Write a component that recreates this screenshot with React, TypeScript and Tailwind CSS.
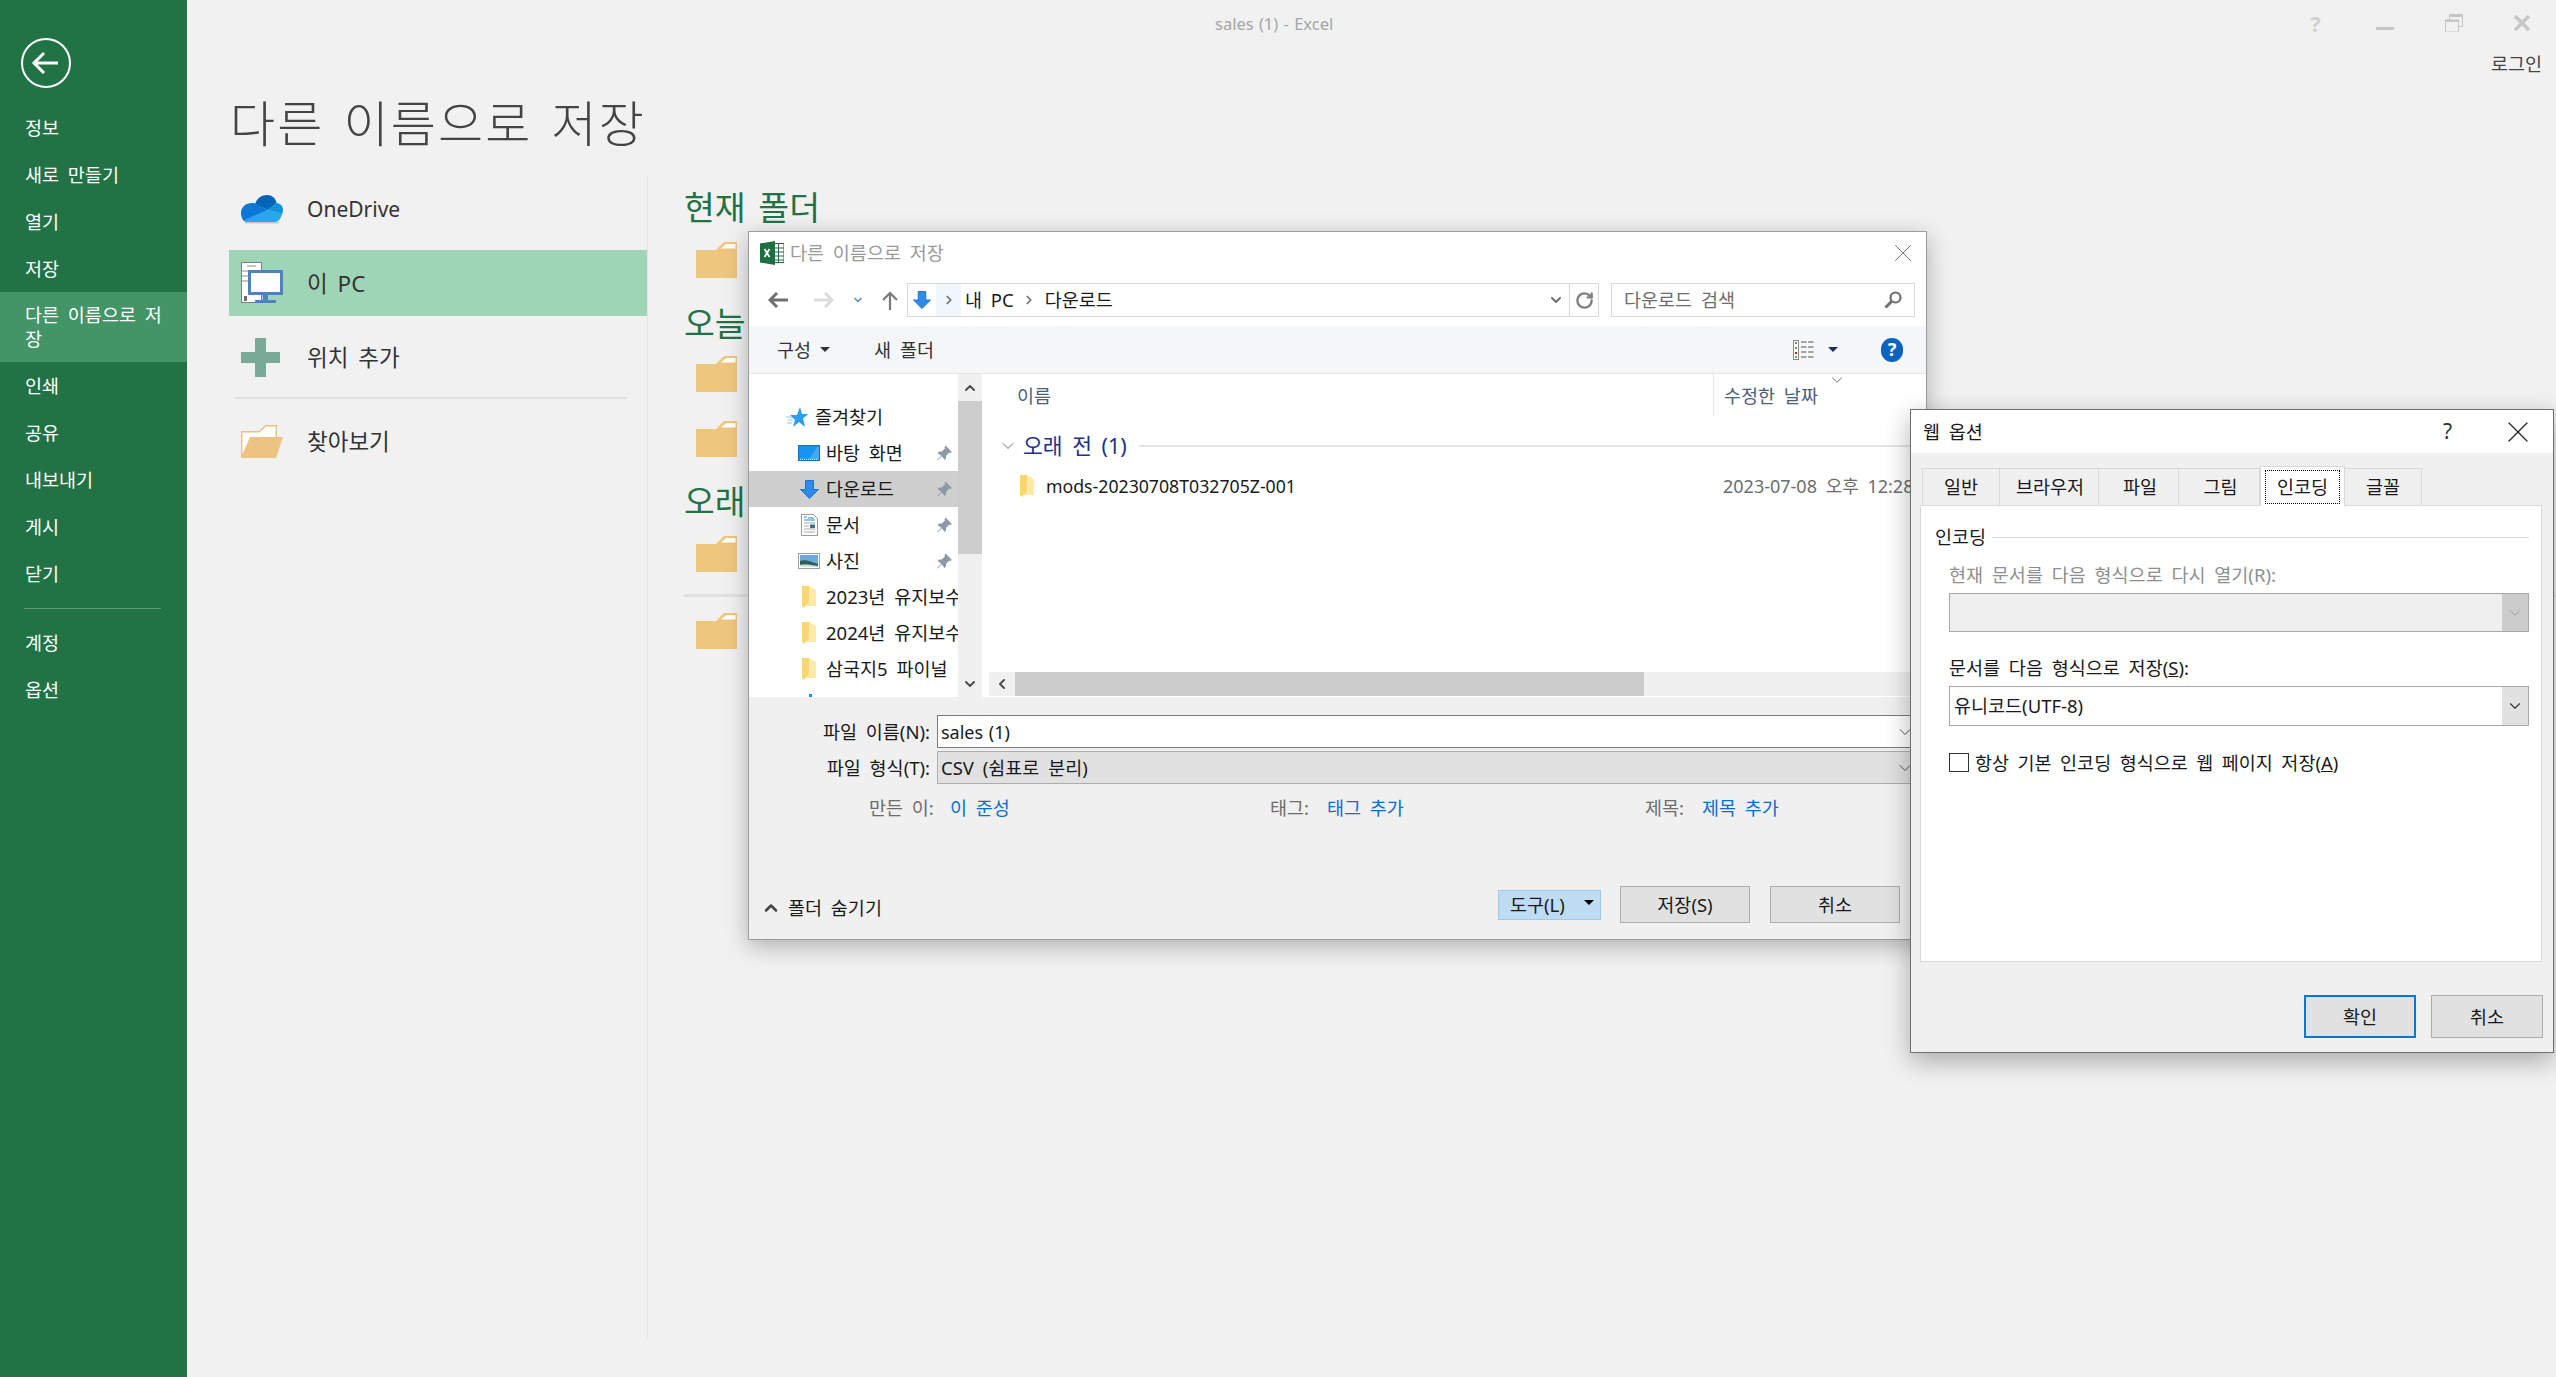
import { ChevronDown, ChevronLeft, ChevronRight, ChevronUp, RotateCw, X } from "lucide-react";
import type { ReactNode } from "react";

const menuTop = ["정보", "새로 만들기", "열기", "저장"];
const menuMid = ["인쇄", "공유", "내보내기", "게시", "닫기"];
const menuBottom = ["계정", "옵션"];

const OneDriveIcon = () => (
  <svg width="42" height="29" viewBox="0 0 42 29">
    <path d="M3 27h36l-2 1.5H5z" fill="#c8c8c8" />
    <path d="M14 9C16 3 21 0 26 0c5 0 8.500 3 9.500 8L27 15z" fill="#0364b8" />
    <path d="M0 18C0 12 5 8 11 8c1.500 0 3 .3 4 1l12 6-14 12H6C2.500 27 0 23 0 18z" fill="#0a78d4" />
    <path d="M27 15l8-7c4 0 7 3 7 7 0 1.200-.2 2.200-.6 3.200L33 21z" fill="#1490df" />
    <path d="M27 14.500L41.400 18c-1 4.500-3.500 9-7.400 9H7c-1.500 0-3-1-3.800-2z" fill="#28a8ea" />
  </svg>
);

const PcIcon = () => (
  <svg width="42" height="42" viewBox="0 0 42 42">
    <rect x="0.500" y="0.500" width="20" height="40" fill="#fff" stroke="#7f7f7f" />
    <path d="M6 4h9M1 9h19M1 14h19M1 19h19" stroke="#8a8a8a" strokeWidth="1" />
    <rect x="3" y="34" width="3" height="5" fill="#6f6f6f" />
    <rect x="7" y="8" width="35" height="25" rx="1" fill="#4c82bd" />
    <rect x="10" y="11" width="29" height="19" fill="#fff" />
    <rect x="22" y="33" width="5" height="5" fill="#4c82bd" />
    <rect x="14" y="38" width="21" height="3" rx="1" fill="#4c82bd" />
  </svg>
);

const PlusIcon = () => (
  <svg width="39" height="39" viewBox="0 0 39 39">
    <path d="M14 0h11v14h14v11H25v14H14V25H0V14h14z" fill="#7aa996" />
  </svg>
);

const OpenFolderIcon = () => (
  <svg width="42" height="33" viewBox="0 0 42 33">
    <path d="M.7 32V6.700H18L25 .7h10.300V14H10L.7 32z" fill="#fff" stroke="#e8c283" strokeWidth="1.400" />
    <path d="M9 12h33l-7 21H0z" fill="#ecc382" />
  </svg>
);

const FolderIcon = () => (
  <svg width="41" height="36" viewBox="0 0 41 36">
    <path d="M0 8h20L28 0h13v36H0z" fill="#eec77f" />
    <path d="M24 7l6-5.500h10V7z" fill="#fff" stroke="#eec77f" />
  </svg>
);

const YellowFolder = () => (
  <svg width="14" height="22" viewBox="0 0 14 22">
    <path d="M0 0h7l7 4v16H3l-.5 2L0 20z" fill="#ffe9a6" />
    <path d="M0 0h7v17l-4 3-.5 2L0 20z" fill="#f9d66f" />
  </svg>
);

const DesktopIcon = () => (
  <svg width="22" height="16" viewBox="0 0 22 16">
    <rect x="0.500" y="0.500" width="21" height="15" fill="#1a92f0" stroke="#0f6fc6" />
    <path d="M11 14.500L19 2h2v12.500z" fill="#43a9f5" />
    <path d="M2 14.300h18" stroke="#fff" strokeWidth="1" strokeDasharray="1 1" />
  </svg>
);

const DownloadArrow = ({ size = 19 }: { size?: number }) => (
  <svg width={size} height={size} viewBox="0 0 19 19">
    <path d="M5.500.5h8v9H18.500L9.500 18.500.5 9.500h5z" fill="#2f8ae8" stroke="#2472c8" />
  </svg>
);

const DocIcon = () => (
  <svg width="17" height="22" viewBox="0 0 17 22">
    <path d="M.5.5h12l4 4v17H.5z" fill="#fff" stroke="#9a9a9a" />
    <path d="M3 3h3M7 4h6M3 6h11" stroke="#1e90e8" strokeWidth="1.200" />
    <path d="M3 9h11M3 12h5M3 15h11M3 18h11" stroke="#a8a8a8" strokeWidth="1" />
    <rect x="9" y="10.500" width="5" height="3.500" fill="#3a6f9a" />
  </svg>
);

const PictureIcon = () => (
  <svg width="22" height="16" viewBox="0 0 22 16">
    <rect x="0.500" y="0.500" width="21" height="15" fill="#fff" stroke="#a0a0a0" />
    <rect x="2" y="2" width="18" height="12" fill="#6fa8dc" />
    <path d="M2 8c5-2 9 0 18 3v3H2z" fill="#2f5f4f" />
    <path d="M2 12c5-1 11 0 18 1v1H2z" fill="#cfe0ea" />
  </svg>
);

const PinIcon = () => (
  <svg width="17" height="18" viewBox="0 0 16 16">
    <path
      d="M9 1l6 6-1.500 1-1-.5-3 3V13L8 14.500 5.500 11l-4 4-.5-.5 4-4L1.500 8 3 6.500h2.500l3-3L8 2.500z"
      fill="#8c99a6"
    />
  </svg>
);

const StarIcon = () => (
  <svg width="22" height="20" viewBox="0 0 22 20">
    <path d="M14 0l2 7h6l-5 4.500 2 8.500-6-5-6 5 2-7L4 8h7z" fill="#2a9df4" />
    <path d="M0 10h6M2 13h5M1 16h5" stroke="#8cc8f6" strokeWidth="1" />
  </svg>
);

const ExcelIcon = () => (
  <svg width="24" height="24" viewBox="0 0 24 24">
    <rect x="14" y="2.500" width="10" height="19" fill="#fff" stroke="#1e6e42" />
    <path d="M14 7h10M14 11h10M14 15h10M14 19h10M18.500 3v18" stroke="#1e6e42" strokeWidth="1" />
    <path d="M0 2.500L15 0v24L0 21.500z" fill="#1d6f42" />
    <path d="M4.500 8l5 8M9.500 8l-5 8" stroke="#fff" strokeWidth="1.800" />
  </svg>
);

const BackCircle = () => (
  <svg width="50" height="50" viewBox="0 0 50 50">
    <circle cx="25" cy="25" r="24" fill="none" stroke="#fff" strokeWidth="2" />
    <path d="M13 25h24M23 15L13 25l10 10" fill="none" stroke="#fff" strokeWidth="3" />
  </svg>
);

const NavArrow = ({ dir, color }: { dir: "left" | "right"; color: string }) => (
  <svg width="20" height="16" viewBox="0 0 20 16">
    <path
      d={dir === "left" ? "M20 8H2M9 1L2 8l7 7" : "M0 8h18M11 1l7 7-7 7"}
      fill="none"
      stroke={color}
      strokeWidth="3"
    />
  </svg>
);

const UpArrow = () => (
  <svg width="16" height="19" viewBox="0 0 16 19">
    <path d="M8 19V2M1 9l7-7 7 7" fill="none" stroke="#7a7a7a" strokeWidth="2.200" />
  </svg>
);

const SearchIcon = () => (
  <svg width="18" height="18" viewBox="0 0 18 18">
    <circle cx="11.500" cy="6.500" r="5" fill="none" stroke="#6e6e6e" strokeWidth="2.200" />
    <path d="M8 10l-6.500 6.500" stroke="#6e6e6e" strokeWidth="3" />
  </svg>
);

const ViewIcon = () => (
  <svg width="21" height="20" viewBox="0 0 21 20">
    <rect x="0.500" y="0.500" width="5" height="19" fill="#fff" stroke="#8a8a8a" />
    <rect x="2" y="2" width="2" height="2" fill="#5a8a9a" />
    <rect x="2" y="7" width="2" height="2" fill="#7a9a3a" />
    <rect x="2" y="12" width="2" height="2" fill="#c0271c" />
    <rect x="2" y="16" width="2" height="2" fill="#8aa83a" />
    <path d="M8 2h13M8 7h13M8 12h13M8 17h13" stroke="#8a8a8a" strokeWidth="1.300" strokeDasharray="5.500 1.500" />
  </svg>
);

const Caret = ({ className }: { className: string }) => (
  <div className={`w-0 h-0 border-x-[5px] border-x-transparent border-t-[5px] ${className}`} />
);

const WinBtn = ({ children, w = "w-[69px]" }: { children: ReactNode; w?: string }) => (
  <div className={`${w} h-[46px] flex items-center justify-center`}>{children}</div>
);

const Sidebar = () => (
  <aside className="w-[187px] shrink-0 bg-[#217346] flex flex-col text-white text-[18.500px] h-full">
    <div className="ml-[21px] mt-[38px] mb-[16px]">
      <BackCircle />
    </div>
    {menuTop.map((m) => (
      <div key={m} className="h-[47px] flex items-center pl-[25px]">
        {m}
      </div>
    ))}
    <div className="h-[70px] bg-[#439467] pl-[25px] pr-[16px] flex items-center leading-[24px]">
      다른 이름으로 저장
    </div>
    {menuMid.map((m) => (
      <div key={m} className="h-[47px] flex items-center pl-[25px]">
        {m}
      </div>
    ))}
    <div className="mt-[11px] mb-[10px] ml-[24px] w-[137px] h-px bg-[#5a9a76]" />
    {menuBottom.map((m) => (
      <div key={m} className="h-[47px] flex items-center pl-[25px]">
        {m}
      </div>
    ))}
  </aside>
);

const PlaceRow = ({ icon, label, active, size = "text-[22.500px]" }: { icon: ReactNode; label: string; active?: boolean; size?: string }) => (
  <div className={`h-[66px] flex items-center ${active ? "bg-[#9fd5b7]" : ""}`}>
    <div className="w-[78px] pl-[12px] flex items-center">{icon}</div>
    <span className={`${size} pt-[2px] text-[#333]`}>{label}</span>
  </div>
);

const GreenHeading = ({ text, className }: { text: string; className: string }) => (
  <div className={`h-[64px] flex items-center text-[33.500px] text-[#217346] ${className}`}>{text}</div>
);

const Backstage = () => (
  <main className="flex-1 flex flex-col h-full min-w-0">
    <div className="flex h-[46px]">
      <div className="ml-[1028px] pt-[2px] flex items-center text-[16.500px] text-[#a6a6a6] [word-spacing:1px]">
        sales (1) - Excel
      </div>
      <div className="ml-auto flex">
        <WinBtn>
          <span className="text-[22px] font-bold text-[#d0d0d0]">?</span>
        </WinBtn>
        <WinBtn>
          <div className="w-[18px] h-[3px] bg-[#c6c6c6] mt-[10px]" />
        </WinBtn>
        <WinBtn>
          <svg width="18" height="18" viewBox="0 0 18 18">
            <rect x="4.500" y="0.500" width="13" height="12" fill="none" stroke="#c6c6c6" />
            <rect x="0.500" y="6" width="13" height="12" fill="#f1f1f1" stroke="#c6c6c6" />
            <path d="M1 7h12M5 2h12" stroke="#c6c6c6" strokeWidth="2" />
          </svg>
        </WinBtn>
        <WinBtn w="w-[68px]">
          <svg width="16" height="16" viewBox="0 0 16 16">
            <path d="M1 1l14 14M15 1L1 15" stroke="#c6c6c6" strokeWidth="3.500" />
          </svg>
        </WinBtn>
      </div>
    </div>
    <div className="mt-[8px] h-[20px] flex justify-end items-center pr-[14px] text-[18.500px] text-[#444]">로그인</div>
    <h1 className="mt-[20px] h-[60px] pl-[43px] flex items-center text-[49px] font-light tracking-[2.200px] text-[#444]">
      다른 이름으로 저장
    </h1>
    <div className="mt-[21px] ml-[42px] flex h-[1163px]">
      <div className="w-[418px] shrink-0 flex flex-col gap-[8px] pt-[1px]">
        <PlaceRow icon={<OneDriveIcon />} label="OneDrive" size="text-[21px]" />
        <PlaceRow icon={<PcIcon />} label="이 PC" active />
        <PlaceRow icon={<PlusIcon />} label="위치 추가" />
        <div className="ml-[6px] mr-[20px] h-[2px] bg-[#e1e1e1] -my-[1px]" />
        <div className="mt-[2px]">
          <PlaceRow icon={<OpenFolderIcon />} label="찾아보기" />
        </div>
      </div>
      <div className="flex-1 border-l border-[#e4e4e4] pl-[36px]">
        <GreenHeading text="현재 폴더" className="" />
        <div className="ml-[12px] mt-[3px]">
          <FolderIcon />
        </div>
        <GreenHeading text="오늘" className="mt-[13px] -mb-px" />
        <div className="ml-[12px] mt-[2px]">
          <FolderIcon />
        </div>
        <div className="ml-[12px] mt-[29px]">
          <FolderIcon />
        </div>
        <GreenHeading text="오래 전" className="mt-[12px] -mb-px" />
        <div className="ml-[12px] mt-[4px]">
          <FolderIcon />
        </div>
        <div className="mt-[22px] h-[3px] bg-[#e1e1e1]" />
        <div className="ml-[12px] mt-[16px]">
          <FolderIcon />
        </div>
      </div>
    </div>
  </main>
);

const navRows: { icon: ReactNode; label: string; pin?: boolean; active?: boolean }[] = [
  { icon: <DesktopIcon />, label: "바탕 화면", pin: true },
  { icon: <DownloadArrow />, label: "다운로드", pin: true, active: true },
  { icon: <DocIcon />, label: "문서", pin: true },
  { icon: <PictureIcon />, label: "사진", pin: true },
  { icon: <YellowFolder />, label: "2023년 유지보수" },
  { icon: <YellowFolder />, label: "2024년 유지보수" },
  { icon: <YellowFolder />, label: "삼국지5 파이널" },
];

const SaveDialog = () => (
  <section className="absolute left-[748px] top-[231px] w-[1179px] h-[709px] bg-white border border-[#9c9c9c] shadow-[0_6px_22px_rgba(0,0,0,0.28)] flex flex-col text-[18.500px] text-[#1a1a1a]">
    <div className="h-[42px] mb-[9px] shrink-0 flex items-center pl-[11px] pr-[8px]">
      <ExcelIcon />
      <span className="ml-[6px] text-[#9a9a9a]">다른 이름으로 저장</span>
      <X className="ml-auto" size={30} strokeWidth={0.800} color="#777" />
    </div>
    <div className="h-[34px] shrink-0 flex items-center">
      <div className="ml-[19px]">
        <NavArrow dir="left" color="#707070" />
      </div>
      <div className="ml-[26px]">
        <NavArrow dir="right" color="#dcdcdc" />
      </div>
      <ChevronDown className="ml-[18px]" size={12} strokeWidth={3.500} color="#5f93c9" />
      <div className="ml-[18px]">
        <UpArrow />
      </div>
      <div className="ml-[9px] w-[692px] h-[34px] border border-[#d9d9d9] flex items-center">
        <div className="w-[28px] flex justify-center">
          <DownloadArrow size={18} />
        </div>
        <div className="w-[25px] h-full bg-[#eff6fc] flex items-center justify-center">
          <ChevronRight size={14} strokeWidth={3} color="#707070" />
        </div>
        <span className="ml-[4px]">내 PC</span>
        <ChevronRight className="ml-[8px]" size={14} strokeWidth={3} color="#707070" />
        <span className="ml-[9px]">다운로드</span>
        <ChevronDown className="ml-auto mr-[5px]" size={16} strokeWidth={3} color="#707070" />
        <div className="w-[29px] h-full border-l border-[#d9d9d9] flex items-center justify-center">
          <RotateCw size={19} strokeWidth={3} color="#808080" />
        </div>
      </div>
      <div className="ml-[12px] w-[304px] h-[34px] border border-[#d9d9d9] flex items-center pl-[12px] pr-[12px] text-[#6d6d6d]">
        <span>다운로드 검색</span>
        <div className="ml-auto">
          <SearchIcon />
        </div>
      </div>
    </div>
    <div className="mt-[9px] h-[48px] shrink-0 bg-[#f5f6f7] border-b border-[#e5e5e5] flex items-center text-[#333]">
      <span className="ml-[28px]">구성</span>
      <Caret className="ml-[9px] border-t-[#333]" />
      <span className="ml-[44px]">새 폴더</span>
      <div className="ml-auto">
        <ViewIcon />
      </div>
      <Caret className="ml-[14px] border-t-[#1a2f5c]" />
      <div className="ml-[43px] mr-[23px] w-[22px] h-[24px] rounded-full bg-[#0a63bf] text-white text-[18px] font-bold flex items-center justify-center">
        ?
      </div>
    </div>
    <div className="h-[323px] shrink-0 flex overflow-hidden">
      <div className="w-[209px] shrink-0 pt-[25px] overflow-hidden">
        <div className="h-[36px] flex items-center pl-[37px]">
          <StarIcon />
          <span className="ml-[7px]">즐겨찾기</span>
        </div>
        {navRows.map((r) => (
          <div
            key={r.label}
            className={`h-[36px] flex items-center ${r.active ? "bg-[#cfcfcf]" : ""}`}
          >
            <div className="ml-[49px] mr-[6px] w-[22px] shrink-0 flex justify-center">{r.icon}</div>
            <span className="whitespace-nowrap overflow-hidden">{r.label}</span>
            {r.pin && (
              <div className="ml-auto mr-[5px]">
                <PinIcon />
              </div>
            )}
          </div>
        ))}
        <div className="ml-[60px] mt-[7px] w-[3px] h-[3px] bg-[#1a92f0]" />
      </div>
      <div className="w-[24px] shrink-0 bg-[#f0f0f0] flex flex-col items-center">
        <div className="h-[27px] flex items-center">
          <ChevronUp size={16} strokeWidth={3} color="#505050" />
        </div>
        <div className="w-full h-[153px] bg-[#cdcdcd]" />
        <div className="mt-auto h-[26px] flex items-center">
          <ChevronDown size={16} strokeWidth={3} color="#505050" />
        </div>
      </div>
      <div className="flex-1 min-w-0 pl-[3px] flex flex-col">
        <div className="h-[42px] shrink-0 flex">
          <div className="w-[728px] shrink-0 pl-[32px] pt-[2px] flex items-center text-[#4c607a]">이름</div>
          <div className="relative flex-1 border-l border-[#e5e5e5] pl-[10px] pt-[2px] flex items-center text-[#4c607a]">
            수정한 날짜
            <ChevronDown className="absolute left-[114px] top-[-3px]" size={18} strokeWidth={1} color="#444" />
          </div>
        </div>
        <div className="mt-[17px] h-[26px] shrink-0 flex items-center pl-[13px]">
          <ChevronDown size={20} strokeWidth={1} color="#555" />
          <span className="ml-[5px] text-[21.500px] text-[#1e3287]">오래 전 (1)</span>
          <div className="ml-[12px] flex-1 h-[2px] bg-[#e5e5e5]" />
        </div>
        <div className="mt-[16px] h-[22px] shrink-0 flex items-center whitespace-nowrap">
          <div className="w-[728px] shrink-0 pl-[35px] flex items-center">
            <YellowFolder />
            <span className="ml-[12px] text-[17.700px]">mods-20230708T032705Z-001</span>
          </div>
          <span className="pl-[10px] text-[18px] text-[#6d6d6d]">2023-07-08 오후 12:28</span>
        </div>
        <div className="mt-auto ml-[4px] h-[24px] mb-px shrink-0 bg-[#f0f0f0] flex">
          <div className="w-[26px] flex items-center justify-center">
            <ChevronLeft size={16} strokeWidth={3} color="#505050" />
          </div>
          <div className="w-[629px] bg-[#cbcbcb]" />
        </div>
      </div>
    </div>
    <div className="flex-1 bg-[#f0f0f0] flex flex-col">
      <div className="mt-[18px] flex h-[33px]">
        <div className="w-[181px] text-right flex items-center justify-end">파일 이름(N):</div>
        <div className="ml-[7px] flex-1 mr-[9px] bg-white border border-[#7a7a7a] flex items-center pl-[3px]">
          <span className="text-[18px] pt-[1px] [word-spacing:1px]">sales (1)</span>
          <ChevronDown className="ml-auto mr-[1px]" size={20} strokeWidth={1.200} color="#555" />
        </div>
      </div>
      <div className="mt-[3px] flex h-[33px]">
        <div className="w-[181px] text-right flex items-center justify-end">파일 형식(T):</div>
        <div className="ml-[7px] flex-1 mr-[9px] bg-[#e1e1e1] border border-[#adadad] flex items-center pl-[3px]">
          CSV (쉼표로 분리)
          <ChevronDown className="ml-auto mr-[1px]" size={20} strokeWidth={1.200} color="#555" />
        </div>
      </div>
      <div className="mt-[12px] h-[24px] ml-[120px] flex items-center">
        <div className="w-[401px] flex items-center">
          <span className="w-[81px] text-[#6d6d6d]">만든 이:</span>
          <span className="text-[#0a6ecf]">이 준성</span>
        </div>
        <div className="w-[375px] flex items-center">
          <span className="w-[57px] text-[#6d6d6d]">태그:</span>
          <span className="text-[#0a6ecf]">태그 추가</span>
        </div>
        <div className="flex items-center">
          <span className="w-[57px] text-[#6d6d6d]">제목:</span>
          <span className="text-[#0a6ecf]">제목 추가</span>
        </div>
      </div>
      <div className="mt-[66px] flex items-center pl-[12px] pr-[26px]">
        <div className="flex items-center mt-[7px]">
          <ChevronUp size={20} strokeWidth={3} color="#444" />
          <span className="ml-[7px]">폴더 숨기기</span>
        </div>
        <div className="ml-auto w-[103px] h-[30px] bg-[#bedcf4] border border-[#9ccbf0] flex items-center pl-[11px] pt-[1px]">
          도구(L)
          <Caret className="ml-auto mr-[6px] -mt-[6px] border-t-black" />
        </div>
        <button className="ml-[19px] w-[130px] h-[37px] bg-[#e1e1e1] border border-[#adadad]">저장(S)</button>
        <button className="ml-[20px] w-[130px] h-[37px] bg-[#e1e1e1] border border-[#adadad]">취소</button>
      </div>
    </div>
  </section>
);

const tabs = [
  { label: "일반", w: "w-[78px]" },
  { label: "브라우저", w: "w-[99px] pl-[2px]" },
  { label: "파일", w: "w-[80px] pl-[3px]" },
  { label: "그림", w: "w-[81px] pl-[3px]" },
];

const WebOptions = () => (
  <section className="absolute left-[1910px] top-[409px] w-[644px] h-[644px] bg-[#f0f0f0] border border-[#6e6e6e] shadow-[0_8px_24px_rgba(0,0,0,0.3)] flex flex-col text-[18.500px] text-[#1a1a1a]">
    <div className="h-[43px] shrink-0 bg-white flex items-center pl-[12px]">
      <span>웹 옵션</span>
      <span className="ml-auto text-[21px] text-[#333]">?</span>
      <X className="ml-[48px] mr-[17px]" size={36} strokeWidth={0.800} color="#222" />
    </div>
    <div className="mt-[15px] ml-[11px] h-[37px] shrink-0 flex items-end">
      {tabs.map((t) => (
        <div
          key={t.label}
          className={`${t.w} h-[37px] border-t border-r border-[#d9d9d9] first:border-l flex items-center justify-center`}
        >
          {t.label}
        </div>
      ))}
      <div className="relative z-10 -mb-px w-[85px] h-[40px] bg-white border-x border-t border-[#d9d9d9] flex items-center justify-center">
        <div className="w-[75px] h-[34px] border border-dotted border-black flex items-center justify-center">
          인코딩
        </div>
      </div>
      <div className="w-[77px] h-[37px] border-t border-r border-[#d9d9d9] flex items-center justify-center">글꼴</div>
    </div>
    <div className="ml-[9px] w-[622px] h-[457px] shrink-0 bg-white border border-[#d9d9d9] flex flex-col pl-[14px] pr-[12px]">
      <div className="mt-[21px] h-[20px] flex items-center">
        <span>인코딩</span>
        <div className="ml-[6px] flex-1 h-px bg-[#d9d9d9]" />
      </div>
      <div className="ml-[14px] flex flex-col">
        <div className="mt-[18px] h-[20px] flex items-center text-[#8f8f8f]">현재 문서를 다음 형식으로 다시 열기(R):</div>
        <div className="mt-[8px] h-[39px] bg-[#efefef] border border-[#a9a9a9] flex justify-end">
          <div className="w-[26px] bg-[#cccccc] flex items-center justify-center">
            <ChevronDown size={18} strokeWidth={1.200} color="#999" />
          </div>
        </div>
        <div className="mt-[26px] h-[20px] flex items-center">
          문서를 다음 형식으로 저장(<span className="underline">S</span>):
        </div>
        <div className="mt-[8px] h-[40px] bg-white border border-[#a9a9a9] flex items-center pl-[4px]">
          유니코드(UTF-8)
          <div className="ml-auto w-[26px] h-full bg-[#e1e1e1] flex items-center justify-center">
            <ChevronDown size={18} strokeWidth={1.500} color="#333" />
          </div>
        </div>
        <div className="mt-[23px] flex items-center">
          <div className="w-[20px] h-[19px] border border-[#333] bg-white" />
          <span className="ml-[6px] [word-spacing:3.700px]">
            항상 기본 인코딩 형식으로 웹 페이지 저장(<span className="underline">A</span>)
          </span>
        </div>
      </div>
    </div>
    <div className="mt-[33px] pr-[10px] flex justify-end gap-[15px]">
      <button className="w-[112px] h-[43px] bg-[#e1e1e1] border-2 border-[#0078d7]">확인</button>
      <button className="w-[112px] h-[43px] bg-[#e1e1e1] border border-[#adadad]">취소</button>
    </div>
  </section>
);

export default function App() {
  return (
    <div className="relative w-[2556px] h-[1377px] overflow-hidden bg-[#f1f1f1] flex [font-family:'Noto_Sans','Noto_Sans_CJK_KR',sans-serif] [word-spacing:4px]">
      <Sidebar />
      <Backstage />
      <SaveDialog />
      <WebOptions />
    </div>
  );
}
